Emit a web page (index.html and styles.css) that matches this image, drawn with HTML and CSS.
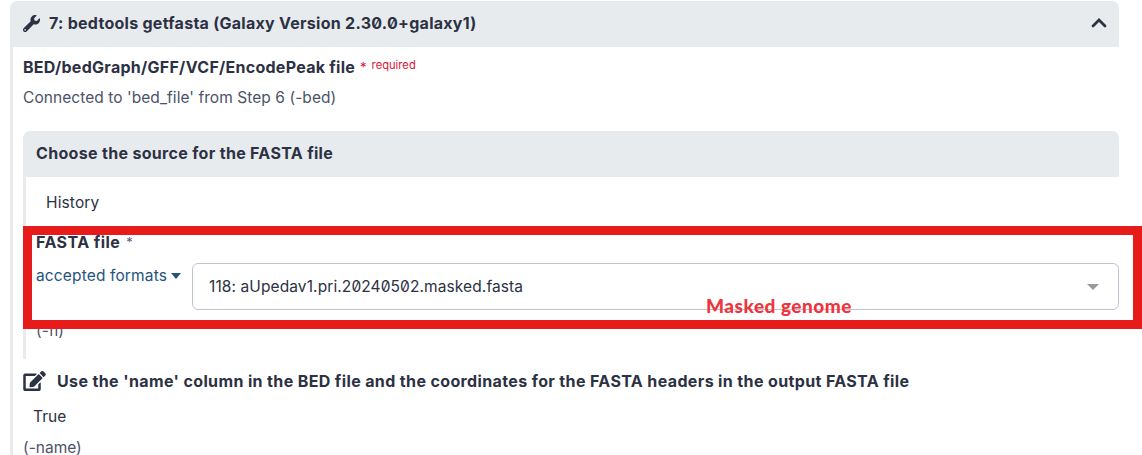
FILE: index.html
```html
<!DOCTYPE html>
<html lang="en">
<head>
<meta charset="utf-8">
<title>bedtools getfasta</title>
<link rel="stylesheet" href="styles.css">
</head>
<body>
<main class="tool">
  <header class="bar tool-bar">
    <svg class="wrench" viewBox="0 0 512 512"><path d="M507.73 109.1c-2.24-9.03-13.54-12.09-20.12-5.51l-74.36 74.36-67.88-11.31-11.31-67.88 74.36-74.36c6.62-6.62 3.43-17.9-5.66-20.16-47.38-11.74-99.55.91-136.58 37.93-39.64 39.64-50.55 97.1-34.05 147.2L18.74 402.76c-24.99 24.99-24.99 65.51 0 90.5 24.99 24.99 65.51 24.99 90.5 0l213.21-213.21c50.12 16.71 107.47 5.68 147.37-34.22 37.07-37.07 49.7-89.32 37.91-136.73zM64 472c-13.25 0-24-10.75-24-24 0-13.26 10.75-24 24-24s24 10.74 24 24c0 13.25-10.75 24-24 24z"/></svg>
    <h1 class="strong t-title">7: bedtools getfasta (Galaxy Version 2.30.0+galaxy1)</h1>
    <svg class="chevron" viewBox="0 0 16 10"><path d="M2 8 8 2l6 6"/></svg>
  </header>
  <div class="tool-body">
    <div class="row bed-row"><span class="strong t-bed">BED/bedGraph/GFF/VCF/EncodePeak file</span><span class="star">*</span><span class="required">required</span></div>
    <div class="row connected"><span class="t-connected">Connected to 'bed_file' from Step 6 (-bed)</span></div>
    <section class="source">
      <div class="bar source-bar"><h2 class="strong t-choose">Choose the source for the FASTA file</h2></div>
      <div class="source-body">
        <div class="row history"><span class="t-history">History</span></div>
        <div class="row fasta-row"><span class="strong t-fasta">FASTA file</span><span class="star muted">*</span></div>
        <div class="picker">
          <div class="formats"><span class="t-formats">accepted formats</span><i class="caret"></i></div>
          <div class="select"><span class="t-select">118: aUpedav1.pri.20240502.masked.fasta</span><i class="caret select-caret"></i></div>
        </div>
        <div class="row flag"><span class="t-flag">(-fi)</span></div>
      </div>
    </section>
    <div class="row name-row">
      <svg class="edit" viewBox="0 0 576 512"><path d="M402.6 83.2l90.2 90.2c3.8 3.8 3.8 10 0 13.8L274.4 405.6l-92.8 10.3c-12.4 1.4-22.9-9.1-21.5-21.5l10.3-92.8L388.8 83.2c3.8-3.8 10-3.8 13.8 0zm162-22.9l-48.8-48.8c-15.2-15.2-39.9-15.2-55.2 0l-35.4 35.4c-3.8 3.8-3.8 10 0 13.8l90.2 90.2c3.8 3.8 10 3.8 13.8 0l35.4-35.4c15.2-15.3 15.2-40 0-55.2zM384 346.2V448H64V128h229.8c3.2 0 6.2-1.3 8.5-3.5l40-40c7.6-7.6 2.2-20.5-8.5-20.5H48C21.5 64 0 85.5 0 112v352c0 26.5 21.5 48 48 48h352c26.5 0 48-21.5 48-48V306.2c0-10.7-12.9-16-20.5-8.5l-40 40c-2.2 2.3-3.5 5.3-3.5 8.5z"/></svg>
      <span class="strong t-use">Use the 'name' column in the BED file and the coordinates for the FASTA headers in the output FASTA file</span>
    </div>
    <div class="row true-row"><span class="t-true">True</span></div>
    <div class="row name-flag"><span class="t-name">(-name)</span></div>
  </div>
</main>
<div class="highlight"></div>
<div class="note">Masked genome</div>
</body>
</html>
```
FILE: styles.css
```css
* { box-sizing: border-box; }
body {
  margin: 0;
  height: 455px;
  overflow: hidden;
  position: relative;
  background: #fff;
  color: #2c3143;
  font: 15.5px/24px Inter, "Liberation Sans", sans-serif;
  font-feature-settings: "zero" 1;
  white-space: nowrap;
}
.strong { margin: -2px 0 0; font-weight: 700; font-size: 16px; letter-spacing: 0.27px; }
.t-choose { letter-spacing: 0.32px; }
.t-fasta { letter-spacing: 0.45px; }
.t-use { letter-spacing: 0.37px; }
.t-connected { letter-spacing: 0.06px; }
.t-history, .t-formats { letter-spacing: 0.14px; }
.t-select { letter-spacing: 0.1px; }
.tool { width: 1109px; margin-left: 10px; padding-top: 1px; }
.bar { display: flex; align-items: center; height: 46px; background: #e8ebee; border-radius: 7px 7px 0 0; }
.tool-bar { padding: 0 13px; }
.wrench { width: 17px; height: 17px; margin: -2px 9px 0 0; fill: #2c3143; }
.chevron { width: 16px; height: 10px; margin: -2px -1px 0 auto; fill: none; stroke: #2c3143; stroke-width: 2.8; stroke-linecap: round; }
.tool-body { height: 420px; padding: 9px 0 0 10px; border-left: 3px solid #e8ebee; }
.row { display: flex; align-items: center; height: 24px; }
.star { margin: -2px 0 0 5px; font-size: 13px; color: #dc1438; }
.required { margin: -6px 0 0 5px; font-size: 11.2px; color: #dc1438; }
.muted { color: #58607a; margin-left: 6px; }
.connected { margin-top: 6px; color: #4c5368; }
.source { margin-top: 21px; }
.source-bar { padding-left: 13px; }
.source-body { height: 182px; padding-left: 10px; border-left: 3px solid #e8ebee; }
.history { padding: 14px 0 0 10px; height: 38px; }
.fasta-row { margin-top: 16px; }
.picker { display: flex; margin-top: 8px; height: 47px; }
.formats { display: flex; align-items: center; width: 156px; height: 26px; color: #25537b; }
.caret { width: 0; height: 0; margin-left: 4px; border: 5.5px solid transparent; border-top: 6px solid #25537b; border-bottom: 0; }
.select { flex: 1; display: flex; align-items: center; padding: 0 19px 0 16px; border: 1px solid #bdc6d0; border-radius: 6px; }
.select-caret { margin-left: auto; border-width: 6px 6px 0; border-top-color: #999; }
.flag { margin-top: 9px; color: #4c5368; }
.name-row { margin-top: 11px; }
.edit { width: 23px; height: 20px; margin: -2px 11px 0 0; fill: #2c3143; }
.true-row { margin-top: 11px; padding-left: 10px; }
.name-flag { margin-top: 7px; color: #4c5368; }
.highlight { position: absolute; left: 23px; top: 226px; width: 1119px; height: 103px; border: 9px solid #e81b1b; }
.note { position: absolute; left: 706px; top: 294px; color: #ef343c; font: 900 19px/24px Lato, sans-serif; letter-spacing: 0.5px; }
```
